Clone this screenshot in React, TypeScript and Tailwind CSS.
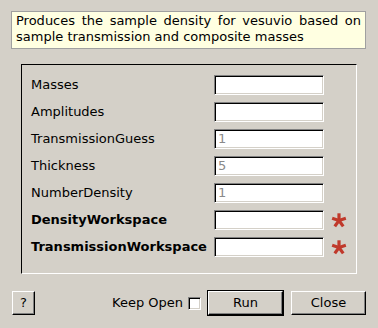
import React from "react";

type Prop = { name: string; value?: string; required?: boolean };

const PROPS: Prop[] = [
  { name: "Masses" },
  { name: "Amplitudes" },
  { name: "TransmissionGuess", value: "1" },
  { name: "Thickness", value: "5" },
  { name: "NumberDensity", value: "1" },
  { name: "DensityWorkspace", required: true },
  { name: "TransmissionWorkspace", required: true },
];

function Asterisk() {
  const arms = [-90, -18, 54, 126, 198];
  return (
    <svg width="16" height="16" viewBox="0 0 16 16" className="shrink-0">
      {arms.map((a) => {
        const r = (a * Math.PI) / 180;
        return (
          <line
            key={a}
            x1="8"
            y1="8.5"
            x2={8 + Math.cos(r) * 7.2}
            y2={8.5 + Math.sin(r) * 7.2}
            stroke="#c0392b"
            strokeWidth="3.2"
            strokeLinecap="butt"
          />
        );
      })}
    </svg>
  );
}

const raised =
  "border-t border-l border-t-white border-l-white border-b border-r border-b-black border-r-black shadow-[inset_-1px_-1px_0_#808080] bg-[#d4d0c8]";

export default function App() {
  return (
    <div className="flex h-[328px] w-[378px] flex-col bg-[#d4d0c8] font-['DejaVu_Sans',sans-serif] text-[13px] text-black">
      <div className="ml-[11px] mt-[11px] h-[38px] w-[355px] border border-[#a0a0a0] bg-[#ffffe1] px-[4px] pt-[1px] text-justify leading-[16px]">
        Produces the sample density for vesuvio based on sample transmission and composite masses
      </div>

      <div className="ml-[21px] mt-[15px] flex h-[210px] w-[336px] flex-col gap-[7px] border-l border-t border-b border-r border-l-black border-t-black border-b-white border-r-white pl-[9px] pt-[10px]">
        {PROPS.map((p) => (
          <div key={p.name} className="flex h-[20px] items-center">
            <span className={`w-[183px] shrink-0 whitespace-nowrap ${p.required ? "font-bold" : ""}`}>{p.name}</span>
            <div className="flex h-[20px] w-[110px] items-center border-l border-t border-b border-r border-l-[#808080] border-t-[#808080] border-b-white border-r-white bg-white pl-[3px] text-[#8a8a8a] shadow-[inset_1px_1px_0_#000,inset_-1px_-1px_0_#d4d0c8]">
              {p.value}
            </div>
            {p.required && (
              <span className="ml-[7px] flex">
                <Asterisk />
              </span>
            )}
          </div>
        ))}
      </div>

      <div className="ml-[12px] mr-[12px] mt-[16px] flex items-center">
        <button className={`flex h-[24px] w-[23px] items-center justify-center ${raised}`}>?</button>
        <div className="flex-1" />
        <span>Keep Open</span>
        <span className="ml-[5px] h-[13px] w-[13px] border-l border-t border-b border-r border-l-[#808080] border-t-[#808080] border-b-white border-r-white bg-white shadow-[inset_1px_1px_0_#000,inset_-1px_-1px_0_#d4d0c8]" />
        <div className="ml-[6px] border border-black">
          <button className={`flex h-[24px] w-[75px] items-center justify-center ${raised}`}>Run</button>
        </div>
        <button className={`ml-[7px] flex h-[24px] w-[75px] items-center justify-center ${raised}`}>Close</button>
      </div>
    </div>
  );
}
